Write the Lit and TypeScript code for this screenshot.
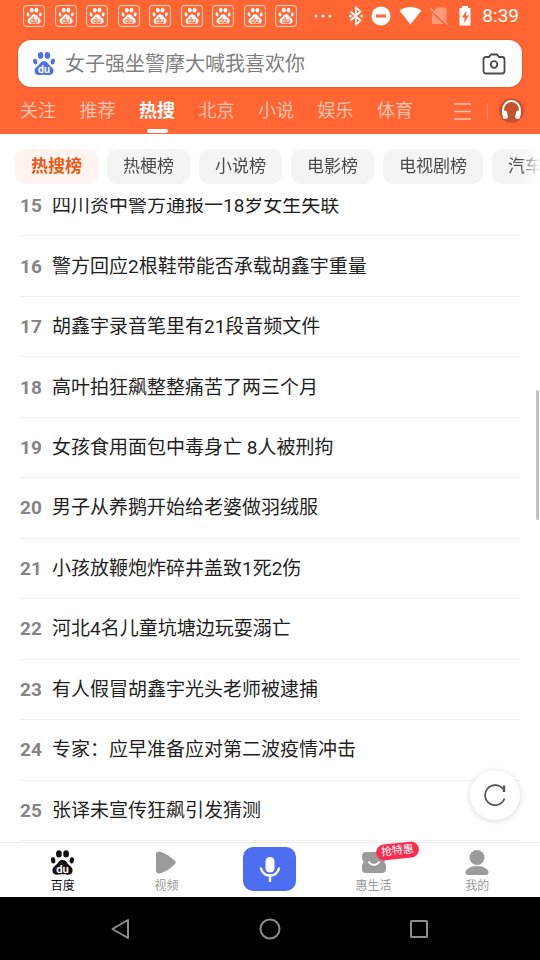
import { LitElement, html, svg, css } from "lit";
import { customElement, property } from "lit/decorators.js";
import { classMap } from "lit/directives/class-map.js";

const pawShape = svg`
  <ellipse cx="6" cy="28" rx="6" ry="9" transform="rotate(-10 6 28)"></ellipse>
  <ellipse cx="22" cy="10" rx="8" ry="10"></ellipse>
  <ellipse cx="42" cy="10" rx="8" ry="10"></ellipse>
  <ellipse cx="58" cy="28" rx="6" ry="9" transform="rotate(10 58 28)"></ellipse>
  <path d="M32 27c-8 0-11 5-14 10C13 43 4 46 4 56c0 8 6 12 13 12 6 0 9-1 15-1s9 1 15 1c7 0 13-4 13-12 0-10-9-13-14-19-3-5-6-10-14-10z"></path>`;

@customElement("paw-icon")
export class PawIcon extends LitElement {
  @property({ type: Boolean }) framed = false;

  static styles = css`
    :host {
      display: inline-flex;
      --mark: #fff;
    }
    svg {
      display: block;
      width: 100%;
      height: 100%;
    }
    .mark {
      font: 700 31px Roboto, sans-serif;
      fill: var(--mark);
      text-anchor: middle;
    }
  `;

  render() {
    return this.framed
      ? html`<svg viewBox="0 0 22 22" fill="currentColor" aria-hidden="true">
          <rect x="0.6" y="0.6" width="20.8" height="20.8" rx="2.5" fill="none" stroke="currentColor" opacity="0.75"></rect>
          <g transform="translate(3.6 2.8) scale(0.235)">${pawShape}<text class="mark" x="32" y="63">du</text></g>
        </svg>`
      : html`<svg viewBox="0 0 64 68" fill="currentColor" aria-hidden="true">
          ${pawShape}<text class="mark" x="32" y="63">du</text>
        </svg>`;
  }
}

@customElement("status-bar")
export class StatusBar extends LitElement {
  static styles = css`
    :host {
      display: flex;
      align-items: center;
      height: 32px;
      padding: 0 21px 0 23px;
      color: #fff;
      font: 400 19px/32px Roboto, sans-serif;
    }
    .notices {
      flex: 1;
      display: flex;
      justify-content: space-between;
    }
    paw-icon {
      width: 22px;
      height: 22px;
      --mark: #ff6633;
    }
    .signals {
      display: flex;
      align-items: center;
      gap: 8px;
      margin-left: 17px;
    }
    svg {
      display: block;
    }
    .dots {
      margin-right: 8px;
    }
  `;

  render() {
    return html`
      <div class="notices">
        ${Array.from({ length: 9 }, () => html`<paw-icon framed></paw-icon>`)}
      </div>
      <div class="signals">
        <svg class="dots" width="19" height="4" fill="#fff"><circle cx="2" cy="2" r="1.5"></circle><circle cx="9" cy="2" r="1.5"></circle><circle cx="16" cy="2" r="1.5"></circle></svg>
        <svg width="14" height="20" viewBox="0 0 14 20" fill="none" stroke="#fff" stroke-width="1.8"><path d="M1.5 5.5l10 9L7 18.500V1.500l4.500 4L1.500 14.500"></path><circle cx="1.300" cy="10" r="0.600"></circle><circle cx="12.800" cy="10" r="0.600"></circle></svg>
        <svg width="20" height="20"><circle cx="10" cy="10" r="9.500" fill="#fff"></circle><rect x="5" y="8.500" width="10" height="3" fill="#ff6633"></rect></svg>
        <svg width="23" height="20"><path d="M0.500 4.500C7-0.200 16-0.200 22.500 4.500L11.500 18.500z" fill="#fff"></path></svg>
        <svg width="18" height="20"><path d="M7.500 1.500H15a1.500 1.500 0 0 1 1.500 1.500v15H2V7z" fill="#ff9a78"></path><path d="M0.500 3.500l17 16" stroke="#ff6633" stroke-width="3"></path><path d="M0.500 2.500l17 16" stroke="#ffa688" stroke-width="1.500"></path></svg>
        <svg width="18" height="20"><path d="M6 0h6v2h2.500v17.500h-11V2H6z" fill="#fff"></path><path d="M10.500 4.500L6 11.500h2.500v5.500l4-7.500H10z" fill="#ff6633"></path></svg>
        <span>8:39</span>
      </div>
    `;
  }
}

const tabs = ["关注", "推荐", "热搜", "北京", "小说", "娱乐", "体育"];
const boards = ["热搜榜", "热梗榜", "小说榜", "电影榜", "电视剧榜", "汽车榜"];
const topics: [number, string][] = [
  [15, "四川资中警方通报一18岁女生失联"],
  [16, "警方回应2根鞋带能否承载胡鑫宇重量"],
  [17, "胡鑫宇录音笔里有21段音频文件"],
  [18, "高叶拍狂飙整整痛苦了两三个月"],
  [19, "女孩食用面包中毒身亡 8人被刑拘"],
  [20, "男子从养鹅开始给老婆做羽绒服"],
  [21, "小孩放鞭炮炸碎井盖致1死2伤"],
  [22, "河北4名儿童坑塘边玩耍溺亡"],
  [23, "有人假冒胡鑫宇光头老师被逮捕"],
  [24, "专家：应早准备应对第二波疫情冲击"],
  [25, "张译未宣传狂飙引发猜测"],
];

@customElement("app-root")
export class AppRoot extends LitElement {
  static styles = css`
    :host {
      display: flex;
      flex-direction: column;
      min-height: 100vh;
      background: #fff;
      color: #1f1f1f;
      font-family: Roboto, "Noto Sans CJK SC", sans-serif;
    }
    * {
      box-sizing: border-box;
    }
    button,
    input {
      margin: 0;
      padding: 0;
      border: 0;
      background: none;
      color: inherit;
      font: inherit;
    }
    a {
      color: inherit;
      text-decoration: none;
    }
    svg {
      display: block;
    }

    .top {
      background: #ff6633;
    }
    .search {
      display: flex;
      align-items: center;
      height: 47px;
      margin: 8px 18px 0;
      padding: 0 16px 0 15px;
      border-radius: 13px;
      background: #fff;
      box-shadow: 0 0 2px #b0451f;
    }
    .search paw-icon {
      width: 22px;
      height: 23px;
      color: #4e6ef2;
    }
    .query {
      flex: 1;
      min-width: 0;
      height: 47px;
      margin: 0 10px;
      outline: 0;
      font-size: 20px;
    }
    .query::placeholder {
      color: #808080;
      opacity: 1;
    }

    .channels {
      display: flex;
      align-items: flex-start;
      height: 47px;
      padding: 0 16px 0 20px;
    }
    .tabs {
      flex: 1;
      display: flex;
      justify-content: space-between;
    }
    .tab {
      display: flex;
      flex-direction: column;
      align-items: center;
      height: 47px;
      padding-top: 12px;
      color: #ffc4af;
      font-size: 18px;
      line-height: 24px;
    }
    .tab.on {
      color: #fff;
      font-weight: 700;
    }
    .tab.on::after {
      content: "";
      width: 21px;
      height: 4px;
      margin-top: 6px;
      border-radius: 2px;
      background: #fff;
    }
    .tools {
      display: flex;
      align-items: center;
      height: 47px;
      margin-left: 41px;
    }
    .rule {
      width: 1px;
      height: 16px;
      margin: 0 11px 0 15px;
      background: #ff9d7c;
    }

    .boards {
      display: flex;
      gap: 9px;
      padding: 15px 0 14px 15px;
      overflow: hidden;
      mask-image: linear-gradient(to left, transparent 0, #000 20px);
    }
    .board {
      flex: none;
      height: 35px;
      padding: 0 16px;
      border-radius: 10px;
      background: #f4f4f4;
      color: #4a4a4a;
      font-size: 17px;
      line-height: 35px;
    }
    .board.on {
      background: #fff4ef;
      color: #f45410;
      font-weight: 700;
    }

    .feed {
      position: relative;
      flex: 1;
      display: flex;
      flex-direction: column;
      overflow: hidden;
    }
    .topics {
      flex: 1;
      display: grid;
      grid-auto-rows: 1fr;
      margin: -22px 20px 1px;
      padding: 0;
      list-style: none;
    }
    .topic {
      display: flex;
      align-items: center;
      height: 100%;
      min-height: 60px;
      padding-top: 1px;
      border-bottom: 1px solid #f0f0f0;
      font-size: 19px;
      line-height: 28px;
    }
    .rank {
      width: 32px;
      color: #858585;
      font-weight: 700;
    }
    .thumb {
      position: absolute;
      top: 192px;
      right: 1px;
      width: 3px;
      height: 130px;
      border-radius: 2px;
      background: #c4c4c4;
    }
    .refresh {
      position: absolute;
      right: 20px;
      bottom: 22px;
      display: grid;
      place-items: center;
      width: 50px;
      height: 50px;
      border-radius: 50%;
      background: #fff;
      box-shadow: 0 1px 6px rgba(0, 0, 0, 0.16);
    }

    .dock {
      display: grid;
      grid-template-columns: repeat(5, 1fr);
      height: 55px;
      padding: 0 11px;
      border-top: 1px solid #ebebeb;
    }
    .item {
      position: relative;
      display: flex;
      flex-direction: column;
      align-items: center;
      gap: 2px;
      padding-top: 7px;
      color: #999;
      font-size: 12px;
      line-height: 18px;
    }
    .item.on {
      color: #111;
    }
    .item paw-icon {
      width: 23px;
      height: 25px;
    }
    .voice {
      align-self: start;
      justify-self: center;
      display: grid;
      place-items: center;
      width: 53px;
      height: 44px;
      margin-top: 4px;
      border-radius: 10px;
      background: #4e6ef2;
    }
    .badge {
      position: absolute;
      top: 0;
      left: 54px;
      padding: 0 5px;
      border-radius: 8px;
      background: #fa2c52;
      color: #fff;
      font-size: 11px;
      line-height: 16px;
      transform: rotate(-6deg);
    }

    .system {
      display: grid;
      grid-template-columns: repeat(3, 1fr);
      place-items: center;
      height: 63px;
      padding: 0 46px;
      background: #000;
    }
  `;

  render() {
    return html`
      <header class="top">
        <status-bar></status-bar>
        <form class="search" role="search">
          <paw-icon></paw-icon>
          <input class="query" type="text" aria-label="搜索" placeholder="女子强坐警摩大喊我喜欢你" />
          <button type="button" aria-label="拍照搜索">
            <svg width="24" height="24" fill="none" stroke="#4a4a4a" stroke-width="1.800"><path d="M4 5h3.200l1.600-2.500h6.400L16.800 5H20a2.500 2.500 0 0 1 2.500 2.500v11.500a2.500 2.500 0 0 1-2.500 2.500H4A2.500 2.500 0 0 1 1.500 19V7.500A2.500 2.500 0 0 1 4 5z" stroke-linejoin="round"></path><circle cx="12" cy="12.500" r="3.300"></circle></svg>
          </button>
        </form>
        <div class="channels">
          <nav class="tabs" aria-label="频道">
            ${tabs.map((t, i) => html`<a href="#" class=${classMap({ tab: true, on: i === 2 })}>${t}</a>`)}
          </nav>
          <div class="tools">
            <button aria-label="全部频道"><svg width="18" height="18" stroke="#ffc4af" stroke-width="1.500"><path d="M0 2h17M0 9.500h17M0 17h17"></path></svg></button>
            <span class="rule"></span>
            <button aria-label="听资讯">
              <svg width="25" height="25"><circle cx="12.500" cy="12.500" r="12.300" fill="#c4532c"></circle><path d="M4 16v-4a8.500 9 0 0 1 17 0V16" fill="none" stroke="#fff" stroke-width="2"></path><rect x="3.500" y="12.500" width="5" height="8.500" rx="2.300" fill="#fff" transform="rotate(-12 6 17)"></rect><rect x="16.500" y="12.500" width="5" height="8.500" rx="2.300" fill="#fff" transform="rotate(12 19 17)"></rect></svg>
            </button>
          </div>
        </div>
      </header>

      <nav class="boards" aria-label="榜单">
        ${boards.map((b, i) => html`<button class=${classMap({ board: true, on: i === 0 })}>${b}</button>`)}
      </nav>

      <main class="feed">
        <ol class="topics">
          ${topics.map(([n, t]) => html`<li><a class="topic" href="#"><span class="rank">${n}</span><span>${t}</span></a></li>`)}
        </ol>
        <span class="thumb"></span>
        <button class="refresh" aria-label="刷新">
          <svg width="22" height="22" fill="none" stroke="#555" stroke-width="1.800"><path d="M20.500 14.500A10 10 0 1 1 19 5"></path><path d="M20 1.500v6.500" stroke-width="2.400"></path></svg>
        </button>
      </main>

      <nav class="dock" aria-label="主导航">
        <a href="#" class="item on"><paw-icon></paw-icon>百度</a>
        <a href="#" class="item">
          <svg width="22" height="25" fill="#9b9b9b"><path d="M1 4.500C1 2 3 1 5.500 1.800c5 1.700 9.500 4.500 14 8.700 1.600 1.500 1.600 2.700 0 4.200-4.500 4.200-9 6.700-14 8.500C3 24 1 23 1 20.500z"></path></svg>视频
        </a>
        <button class="voice" aria-label="语音搜索">
          <svg width="22" height="26" fill="none" stroke="#fff" stroke-width="2.400"><rect x="6.500" y="1" width="9" height="15.500" rx="4.500" fill="#fff" stroke="none"></rect><path d="M2 12.500c1.300 4.500 4.500 7 9 7s7.700-2.500 9-7M11 19.500V25" stroke-linecap="round"></path></svg>
        </button>
        <a href="#" class="item">
          <svg width="24" height="25"><path d="M4 2h16a4 4 0 0 1 4 4v2.500c0 1.500-1.500 2-1.500 3.500S24 14 24 15.500V19a4 4 0 0 1-4 4H4a4 4 0 0 1-4-4v-3.500C0 14 1.500 13.500 1.500 12S0 10 0 8.500V6a4 4 0 0 1 4-4z" fill="#9b9b9b"></path><path d="M6.500 11.500c3 4.500 8 4.500 11 0" fill="none" stroke="#fff" stroke-width="2"></path></svg>惠生活
          <span class="badge">抢特惠</span>
        </a>
        <a href="#" class="item">
          <svg width="24" height="25" fill="#9b9b9b"><circle cx="12" cy="7.500" r="7.500"></circle><path d="M0.500 22.500c0-3 4.500-6.500 11.500-6.500s11.500 3.500 11.500 6.500c0 1.500-1 2.500-2.500 2.500H3c-1.500 0-2.500-1-2.500-2.500z"></path></svg>我的
        </a>
      </nav>

      <footer class="system">
        <button aria-label="返回"><svg width="22" height="22" fill="none" stroke="#8c8c8c" stroke-width="2"><path d="M18 2v18L2.500 11z" stroke-linejoin="round"></path></svg></button>
        <button aria-label="主屏幕"><svg width="22" height="22" fill="none" stroke="#8c8c8c" stroke-width="2"><circle cx="11" cy="11" r="9.500"></circle></svg></button>
        <button aria-label="最近任务"><svg width="20" height="20" fill="none" stroke="#8c8c8c" stroke-width="2"><rect x="2" y="2" width="16" height="16" rx="0.500"></rect></svg></button>
      </footer>
    `;
  }
}
